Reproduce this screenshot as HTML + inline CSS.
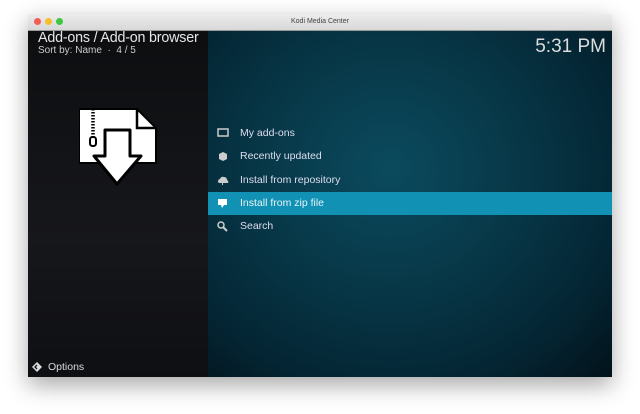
<!DOCTYPE html>
<html><head><style>
body{margin:0;width:640px;height:414px;background:#fff;font-family:"Liberation Sans",sans-serif;overflow:hidden;position:relative}
.win{position:absolute;left:28px;top:14px;width:584px;height:363px;box-shadow:0 8px 22px rgba(0,0,0,.35);background:#000}
.tb{position:absolute;left:0;top:0;width:584px;height:16px;background:linear-gradient(#ececec,#d8d8d8);border-bottom:1px solid #999;text-align:center;font-size:7px;color:#444;line-height:16px}
.dot{position:absolute;top:4px;width:7px;height:7px;border-radius:50%}
.left{position:absolute;left:0;top:17px;width:180px;height:346px;background:linear-gradient(#0d0e10,#16171b 60%,#0e0f12)}
.right{position:absolute;left:180px;top:17px;width:404px;height:346px;background:radial-gradient(ellipse at 45% 40%,#0b4a5e 0%,#073848 40%,#042533 75%,#02121a 100%)}
.t1{position:absolute;left:10px;top:16px;color:#e6e6e6;font-size:14.3px;letter-spacing:-0.2px}
.t2{position:absolute;left:10px;top:31px;color:#ccc;font-size:10px}
.clock{position:absolute;right:6px;top:22px;color:#ddd;font-size:19px;font-weight:300}
.row{position:absolute;left:180px;width:404px;height:23px;color:#dde;font-size:10.5px;line-height:23px}
.row span{position:absolute;left:32px}
.row svg{position:absolute;left:9px;top:6px}
.sel{background:#1191b4;color:#e8f4f8}
.opt{position:absolute;left:20px;top:347px;color:#ddd;font-size:10.5px}
</style></head><body>
<div class="win">
<div class="tb">Kodi Media Center
<div class="dot" style="left:6px;background:#f25d56"></div>
<div class="dot" style="left:17px;background:#f6bd2f"></div>
<div class="dot" style="left:28px;background:#3fc63f"></div></div>
<div class="left"></div>
<div class="right"></div>
<div class="t1">Add-ons / Add-on browser</div>
<div class="t2">Sort by: Name &nbsp;·&nbsp; 4 / 5</div>
<div class="clock">5:31 PM</div>
<svg style="position:absolute;left:51px;top:91px" width="84" height="82" viewBox="80 104 84 82">
<path d="M80 108 H138 L157 127 V162 H80 Z" fill="#fff" stroke="#000" stroke-width="2" stroke-linejoin="round"/>
<path d="M138 108 V127 H157" fill="none" stroke="#000" stroke-width="2.5"/>
<path d="M106 129 H131 V155 H142 L118 183 L95 155 H106 Z" fill="#fff" stroke="#000" stroke-width="3" stroke-linejoin="round"/>
<path d="M94 108 V136" stroke="#000" stroke-width="3.5" stroke-dasharray="1.5 1.5"/>
<rect x="91" y="136" width="6" height="9" rx="2.5" fill="#fff" stroke="#000" stroke-width="2"/>
</svg>
<div class="row" style="top:108px"><svg width="12" height="10"><rect x="1" y="1" width="10" height="7" fill="none" stroke="#ccc" stroke-width="1.5"/></svg><span>My add-ons</span></div>
<div class="row" style="top:131px"><svg width="12" height="11"><path d="M2 3 L6 1 L10 3 V8 L6 10 L2 8Z" fill="#ccc"/></svg><span>Recently updated</span></div>
<div class="row" style="top:155px"><svg width="12" height="11"><path d="M1 7 Q1 4 3 4 Q4 1 7 2 Q10 2 10 5 Q12 6 11 8 H6 V10 H5 V8 H2Z" fill="#ccc"/></svg><span>Install from repository</span></div>
<div class="row sel" style="top:178px"><svg width="12" height="11"><path d="M1 1 H10 V7 H7 L5 10 L4 7 H1Z" fill="#fff"/></svg><span>Install from zip file</span></div>
<div class="row" style="top:201px"><svg width="12" height="11"><circle cx="4" cy="4" r="3" fill="none" stroke="#ccc" stroke-width="1.5"/><path d="M6 6 L10 10" stroke="#ccc" stroke-width="2"/></svg><span>Search</span></div>
<svg style="position:absolute;left:4px;top:348px" width="10" height="10"><path d="M5 0 L10 5 L5 10 L0 5Z" fill="#ddd"/><path d="M5 3 L3 5 L5 7" fill="none" stroke="#111" stroke-width="1.3"/></svg>
<div class="opt">Options</div>
</div>
</body></html>
